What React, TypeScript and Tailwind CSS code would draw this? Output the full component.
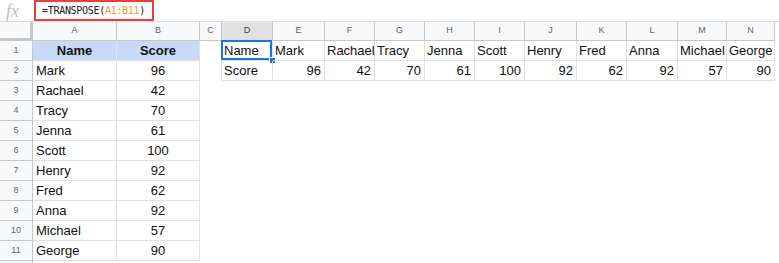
import React from 'react';

const names = ['Mark', 'Rachael', 'Tracy', 'Jenna', 'Scott', 'Henry', 'Fred', 'Anna', 'Michael', 'George'];
const scores = [96, 42, 70, 61, 100, 92, 62, 92, 57, 90];

// widths of the transposed columns D..N, read off the screenshot
const wideCols = [
  { key: 'D', w: 51 },
  { key: 'E', w: 52 },
  { key: 'F', w: 50 },
  { key: 'G', w: 50 },
  { key: 'H', w: 50 },
  { key: 'I', w: 50 },
  { key: 'J', w: 52 },
  { key: 'K', w: 50 },
  { key: 'L', w: 51 },
  { key: 'M', w: 49 },
  { key: 'N', w: 48 },
];

const font = { fontFamily: '"Liberation Sans", Arial, sans-serif' };

function RowHeader({ n }: { n: number }) {
  return (
    <div className="w-[33px] shrink-0 h-full flex items-center justify-center bg-[#f8f9fa] border-r border-b border-[#c7c7c7] text-[9px] text-[#5f6368]">
      {n}
    </div>
  );
}

function ColHeader({ label, w, active }: { label: string; w: number; active?: boolean }) {
  return (
    <div
      style={{ width: w }}
      className={`shrink-0 h-full flex items-center justify-center border-r border-b border-[#c7c7c7] text-[9px] ${
        active ? 'bg-[#e1e1e1] text-[#3c4043]' : 'bg-[#f8f9fa] text-[#5f6368]'
      }`}
    >
      {label}
    </div>
  );
}

export default function App() {
  const rows = [{ name: 'Name', score: 'Score', head: true }, ...names.map((n, i) => ({ name: n, score: String(scores[i]), head: false }))];

  return (
    <div className="w-[779px] h-[263px] bg-white overflow-hidden text-[#111]" style={font}>
      {/* formula bar */}
      <div className="h-[22px] flex border-b border-[#dadce0]">
        <div className="w-[34px] shrink-0 flex items-center pl-[6px] text-[#bdc1c6] italic text-[18px] leading-none" style={{ fontFamily: '"Liberation Serif", serif' }}>
          fx
        </div>
        <div className="w-[120px] shrink-0 border-2 border-[#e8403f] flex items-center pl-[6px] text-[10px] tracking-[-0.3px] text-[#202124]" style={{ fontFamily: '"DejaVu Sans Mono", monospace' }}>
          =TRANSPOSE(<span className="text-[#f29b30]">A1:B11</span>)
        </div>
      </div>

      {/* column headers */}
      <div className="h-[19px] flex">
        <div className="w-[33px] shrink-0 h-full bg-[#f8f9fa] border-r-[3px] border-b-[3px] border-[#c7c7c7]" />
        <ColHeader label="A" w={84} />
        <ColHeader label="B" w={83} />
        <ColHeader label="C" w={22} />
        {wideCols.map((c) => (
          <ColHeader key={c.key} label={c.key} w={c.w} active={c.key === 'D'} />
        ))}
      </div>

      {/* body rows */}
      {rows.map((r, ri) => (
        <div key={ri} className="h-[20px] flex text-[13px]">
          <RowHeader n={ri + 1} />
          <div
            className={`w-[84px] shrink-0 h-full flex items-center pt-px border-r border-b border-[#e2e2e2] ${
              r.head ? 'bg-[#c9daf8] justify-center font-bold' : 'pl-[3px]'
            }`}
          >
            {r.name}
          </div>
          <div
            className={`w-[83px] shrink-0 h-full flex items-center justify-center pt-px border-r border-b border-[#e2e2e2] ${
              r.head ? 'bg-[#c9daf8] font-bold' : ''
            }`}
          >
            {r.score}
          </div>
          <div className={`w-[22px] shrink-0 h-full ${ri < 2 ? 'border-r border-[#e2e2e2]' : ''}`} />
          {ri < 2 &&
            wideCols.map((c, ci) => {
              const text = ci === 0 ? (ri === 0 ? 'Name' : 'Score') : ri === 0 ? names[ci - 1] : String(scores[ci - 1]);
              const numeric = ri === 1 && ci > 0;
              return (
                <div
                  key={c.key}
                  style={{ width: c.w }}
                  className={`relative shrink-0 h-full flex items-center pt-px border-r border-b border-[#e2e2e2] whitespace-nowrap ${
                    numeric ? 'justify-end pr-[3px]' : 'pl-[2px]'
                  }`}
                >
                  {text}
                  {ri === 0 && ci === 0 && (
                    <>
                      <div className="absolute -left-px -top-px right-0 bottom-0 border-2 border-[#1a73e8] pointer-events-none" />
                      <div className="absolute -right-[4px] -bottom-[4px] w-[7px] h-[7px] bg-[#1a73e8] border border-white" />
                    </>
                  )}
                </div>
              );
            })}
        </div>
      ))}

      {/* partial row 12 */}
      <div className="h-[3px] flex">
        <div className="w-[33px] shrink-0 h-full bg-[#f8f9fa] border-r border-[#c7c7c7]" />
      </div>
    </div>
  );
}
